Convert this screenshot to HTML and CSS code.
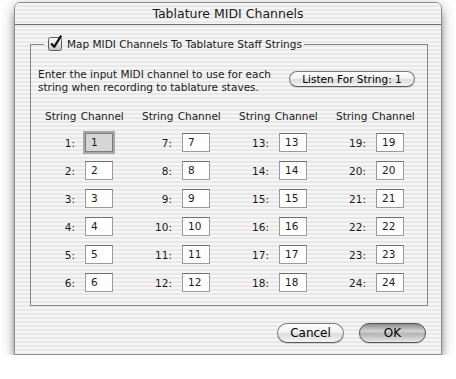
FILE: index.html
```html
<!DOCTYPE html>
<html lang="en">

<head>
    <meta charset="UTF-8">
    <title>Tablature MIDI Channels</title>
    <link rel="stylesheet" href="styles.css">
</head>

<body>
    <div class="window">
        <div class="titlebar">Tablature MIDI Channels</div>

        <div class="content">
            <fieldset class="group">
                <legend>
                    <!-- Checked box -->
                    <span class="check">
                        <svg width="16" height="17" viewBox="0 0 16 17">
                            <defs>
                                <linearGradient id="boxfill" x1="0" y1="0" x2="0" y2="1">
                                    <stop offset="0" stop-color="#ffffff"/>
                                    <stop offset="1" stop-color="#c4c4c4"/>
                                </linearGradient>
                            </defs>
                            <rect x="0.5" y="3.5" width="13" height="13" rx="2" fill="url(#boxfill)" stroke="#5e5e5e"/>
                            <path d="M3.2 9.6 L6.2 12.8 L13.2 1.6" fill="none" stroke="#111" stroke-width="2.2" stroke-linejoin="round"/>
                        </svg>
                    </span>
                    Map MIDI Channels To Tablature Staff Strings
                </legend>

                <div class="intro">
                    <p>Enter the input MIDI channel to use for each<br>string when recording to tablature staves.</p>
                    <button class="pill listen">Listen For String: 1</button>
                </div>

                <div class="channels">
                    <div class="column">
                        <div class="head">String Channel</div>
                        <div class="row"><span class="num">1:</span><span class="box focused">1</span></div>
                        <div class="row"><span class="num">2:</span><span class="box">2</span></div>
                        <div class="row"><span class="num">3:</span><span class="box">3</span></div>
                        <div class="row"><span class="num">4:</span><span class="box">4</span></div>
                        <div class="row"><span class="num">5:</span><span class="box">5</span></div>
                        <div class="row"><span class="num">6:</span><span class="box">6</span></div>
                    </div>
                    <div class="column">
                        <div class="head">String Channel</div>
                        <div class="row"><span class="num">7:</span><span class="box">7</span></div>
                        <div class="row"><span class="num">8:</span><span class="box">8</span></div>
                        <div class="row"><span class="num">9:</span><span class="box">9</span></div>
                        <div class="row"><span class="num">10:</span><span class="box">10</span></div>
                        <div class="row"><span class="num">11:</span><span class="box">11</span></div>
                        <div class="row"><span class="num">12:</span><span class="box">12</span></div>
                    </div>
                    <div class="column">
                        <div class="head">String Channel</div>
                        <div class="row"><span class="num">13:</span><span class="box">13</span></div>
                        <div class="row"><span class="num">14:</span><span class="box">14</span></div>
                        <div class="row"><span class="num">15:</span><span class="box">15</span></div>
                        <div class="row"><span class="num">16:</span><span class="box">16</span></div>
                        <div class="row"><span class="num">17:</span><span class="box">17</span></div>
                        <div class="row"><span class="num">18:</span><span class="box">18</span></div>
                    </div>
                    <div class="column">
                        <div class="head">String Channel</div>
                        <div class="row"><span class="num">19:</span><span class="box">19</span></div>
                        <div class="row"><span class="num">20:</span><span class="box">20</span></div>
                        <div class="row"><span class="num">21:</span><span class="box">21</span></div>
                        <div class="row"><span class="num">22:</span><span class="box">22</span></div>
                        <div class="row"><span class="num">23:</span><span class="box">23</span></div>
                        <div class="row"><span class="num">24:</span><span class="box">24</span></div>
                    </div>
                </div>
            </fieldset>

            <div class="actions">
                <button class="pill cancel">Cancel</button>
                <button class="pill default">OK</button>
            </div>
        </div>
    </div>
</body>

</html>
```

FILE: styles.css
```css
body {
    margin: 0;
    padding: 0;
    background-color: #fff;
    font-family: "DejaVu Sans", Verdana, sans-serif;
    font-size: 10.5px;
    color: #1a1a1a;
}

/* Aqua pinstripes */
.window,
.titlebar {
    background: repeating-linear-gradient(#f6f6f6 0, #f6f6f6 2px, #e8e8e8 2px, #e8e8e8 4px);
}

.window {
    box-sizing: border-box;
    width: 428px;
    height: 353px;
    margin: 2px 0 0 14px;
    border: 1px solid #8c8c8c;
    border-radius: 6px 6px 0 0;
    box-shadow: 0 9px 9px -3px rgba(0, 0, 0, 0.6), 0 3px 14px rgba(0, 0, 0, 0.3);
    display: flex;
    flex-direction: column;
}

.titlebar {
    height: 21px;
    line-height: 21px;
    border-bottom: 1px solid #6a6a6a;
    border-radius: 5px 5px 0 0;
    text-align: center;
    font-size: 12.5px;
}

.content {
    flex: 1;
    padding: 11px 13px 0 15px;
    display: flex;
    flex-direction: column;
}

.group {
    margin: 0;
    padding: 0 12px 13px 7px;
    border: 1px solid #858585;
    min-width: 0;
}

.group legend {
    display: flex;
    align-items: center;
    gap: 3px;
    margin-left: 6px;
    padding: 0 2px 0 4px;
    line-height: 16px;
}

.check {
    display: block;
    width: 16px;
    height: 17px;
    margin-top: -3px;
}

.check svg {
    display: block;
}

.intro {
    display: flex;
    justify-content: space-between;
    align-items: flex-start;
    margin-top: 16px;
}

.intro p {
    margin: 0;
    line-height: 13px;
}

.pill {
    font-family: inherit;
    font-size: 10.5px;
    color: #000;
    border: 1px solid #7a7a7a;
    border-bottom-color: #5a5a5a;
    border-radius: 10px;
    padding: 0;
    background: linear-gradient(#ffffff 0%, #f2f2f2 45%, #dcdcdc 55%, #f4f4f4 100%);
    box-shadow: 0 1px 1px rgba(0, 0, 0, 0.15);
}

.listen {
    width: 126px;
    height: 16px;
    line-height: 14px;
    margin-top: 3px;
}

.channels {
    display: grid;
    grid-template-columns: repeat(4, 97px);
    margin-top: 16px;
}

.column {
    display: flex;
    flex-direction: column;
    gap: 9px;
}

.head {
    padding-left: 7px;
    line-height: 13px;
    margin-bottom: 1px;
    white-space: nowrap;
    word-spacing: 1px;
}

.row {
    display: flex;
    align-items: center;
    gap: 10px;
}

.num {
    width: 37px;
    text-align: right;
}

.box {
    box-sizing: border-box;
    width: 28px;
    height: 19px;
    line-height: 17px;
    padding-left: 5px;
    background-color: #fff;
    border: 1px solid #9a9a9a;
    border-top-color: #6e6e6e;
}

.box.focused {
    background-color: #d6d6d6;
    border-color: #7c7c7c;
    box-shadow: 0 0 0 2px #a9a9a9;
}

.actions {
    display: flex;
    justify-content: flex-end;
    gap: 15px;
    margin-top: 17px;
    padding-right: 2px;
}

.cancel,
.default {
    width: 67px;
    height: 20px;
    font-size: 12px;
}

.default {
    border-color: #555;
    background: linear-gradient(#8c8c8c 0%, #d4d4d4 40%, #b4b4b4 55%, #e8e8e8 100%);
}
```
